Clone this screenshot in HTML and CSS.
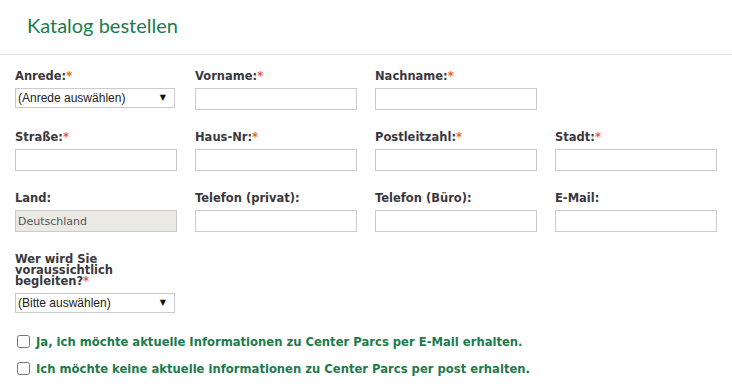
FILE: index.html
```html
<!DOCTYPE html>
<html>
<head>
    <title>Katalog bestellen</title>
    <link rel="stylesheet" href="styles.css">
</head>
<body>
    <div class="header">
        <h1>Katalog bestellen</h1>
    </div>
    <form class="order-form">
        <div class="row">
            <div class="field">
                <label>Anrede:<span class="req">*</span></label>
                <div class="select-wrap">
                    <select><option>(Anrede auswählen)</option></select>
                </div>
            </div>
            <div class="field">
                <label>Vorname:<span class="req">*</span></label>
                <input type="text">
            </div>
            <div class="field">
                <label>Nachname:<span class="req">*</span></label>
                <input type="text">
            </div>
        </div>
        <div class="row">
            <div class="field">
                <label>Straße:<span class="req">*</span></label>
                <input type="text">
            </div>
            <div class="field">
                <label>Haus-Nr:<span class="req">*</span></label>
                <input type="text">
            </div>
            <div class="field">
                <label>Postleitzahl:<span class="req">*</span></label>
                <input type="text">
            </div>
            <div class="field">
                <label>Stadt:<span class="req">*</span></label>
                <input type="text">
            </div>
        </div>
        <div class="row">
            <div class="field">
                <label>Land:</label>
                <input type="text" class="readonly" value="Deutschland" readonly>
            </div>
            <div class="field">
                <label>Telefon (privat):</label>
                <input type="text">
            </div>
            <div class="field">
                <label>Telefon (Büro):</label>
                <input type="text">
            </div>
            <div class="field">
                <label>E-Mail:</label>
                <input type="text">
            </div>
        </div>
        <div class="row last">
            <div class="field">
                <label class="long">Wer wird Sie voraussichtlich begleiten?<span class="req">*</span></label>
                <div class="select-wrap">
                    <select><option>(Bitte auswählen)</option></select>
                </div>
            </div>
        </div>
        <div class="checks">
            <label class="check"><input type="checkbox"> Ja, ich möchte aktuelle Informationen zu Center Parcs per E-Mail erhalten.</label>
            <label class="check"><input type="checkbox"> Ich möchte keine aktuelle informationen zu Center Parcs per post erhalten.</label>
        </div>
    </form>
</body>
</html>
```

FILE: styles.css
```css
body {
    margin: 0;
    font-family: "DejaVu Sans", Verdana, sans-serif;
    font-size: 11px;
    color: #3b383d;
    background-color: #fff;
}

.header {
    height: 54px;
    border-bottom: 1px solid #e2e2e2;
    padding-left: 27px;
}

h1 {
    margin: 0;
    padding-top: 13px;
    font-family: "Lato", "Open Sans", sans-serif;
    font-size: 20px;
    font-weight: normal;
    color: #1c7b4b;
}

.order-form {
    padding: 14px 15px 0;
}

.row {
    display: grid;
    grid-template-columns: repeat(4, 162px);
    column-gap: 18px;
    margin-bottom: 20px;
}

.row.last {
    margin-bottom: 15px;
}

.field label {
    display: block;
    font-size: 11.5px;
    font-weight: bold;
    line-height: 14px;
    margin-bottom: 5px;
}

.field label.long {
    width: 130px;
    line-height: 11px;
    margin-top: 2px;
    margin-bottom: 6px;
}

.req {
    color: #e8602c;
}

input[type="text"] {
    display: block;
    box-sizing: border-box;
    width: 162px;
    height: 22px;
    margin: 0;
    padding: 0 2px;
    border: 1px solid #cbcbcb;
    font-family: "DejaVu Sans", Verdana, sans-serif;
    font-size: 11px;
    color: #555;
}

input.readonly {
    background-color: #ebe9e3;
}

.select-wrap {
    position: relative;
    width: 160px;
}

.select-wrap::after {
    content: "▼";
    position: absolute;
    right: 9px;
    top: 5px;
    font-size: 8px;
    color: #111;
    pointer-events: none;
}

select {
    display: block;
    box-sizing: border-box;
    width: 160px;
    height: 20px;
    margin: 0;
    padding: 0 2px;
    border: 1px solid #cbcbcb;
    border-radius: 0;
    background-color: #fff;
    appearance: none;
    -webkit-appearance: none;
    font-family: "Liberation Sans", Arial, sans-serif;
    font-size: 12px;
    color: #222;
}

.check {
    display: flex;
    align-items: center;
    gap: 6px;
    height: 27px;
    padding-left: 2px;
    font-size: 11.6px;
    font-weight: bold;
    color: #1c7b4b;
}

.check input {
    width: 13px;
    height: 13px;
    margin: 0;
}
```
